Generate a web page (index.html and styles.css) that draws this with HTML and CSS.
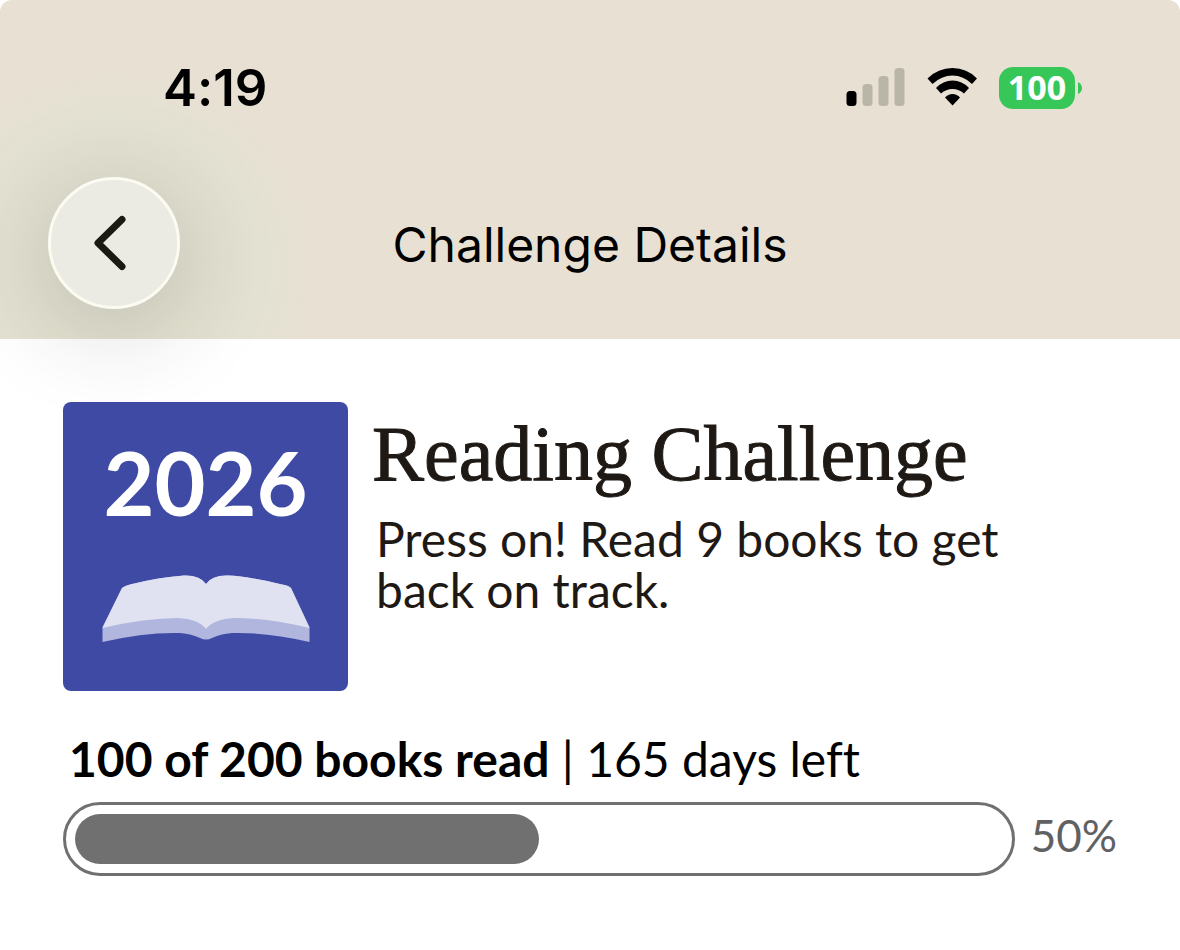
FILE: index.html
```html
<!DOCTYPE html>
<html lang="en">
<head>
<meta charset="utf-8">
<meta name="viewport" content="width=device-width, initial-scale=1">
<title>Challenge Details</title>
<link rel="stylesheet" href="styles.css">
</head>
<body>
<header class="header">
  <div class="status">
    <time class="clock">4:19</time>
    <div class="indicators">
      <svg class="signal" width="60" height="42" viewBox="0 0 60 42" role="img" aria-label="Signal: one bar">
        <rect x="1.500" y="24" width="10" height="15" rx="3.500"/>
        <g fill="#b9b6a8">
          <rect x="17.500" y="17" width="10" height="22" rx="3.500"/>
          <rect x="33.500" y="9" width="10" height="30" rx="3.500"/>
          <rect x="49.500" y="1" width="10" height="38" rx="3.500"/>
        </g>
      </svg>
      <svg class="wifi" width="50" height="42" viewBox="0 0 50 42" role="img" aria-label="Wi-Fi">
        <path d="M0.500 11.500Q11 1 25.500 1T50 11.500L45 17Q36.500 8.500 25.500 8.500T5.500 17Z"/>
        <path d="M9 21Q16 13.500 25.500 13.500T42 21L37 26.500Q32 22 25.500 22T14 26.500Z"/>
        <path d="M18 30.500Q21 27 25.500 27T33 30.500L25.500 38.500Z"/>
      </svg>
      <div class="battery"><span class="battery-level">100</span><svg width="4" height="12" viewBox="0 0 4 12" aria-hidden="true"><path d="M0 0Q4 2 4 6T0 12Z" fill="#37c759"/></svg></div>
    </div>
  </div>
  <nav class="navbar">
    <button class="back" type="button" aria-label="Back">
      <svg width="34" height="56" viewBox="0 0 34 56" aria-hidden="true"><path d="M29 4.500L5 28L29 51.500" fill="none" stroke="#1b1a12" stroke-width="7" stroke-linecap="round" stroke-linejoin="round"/></svg>
    </button>
    <h1 class="screen-title">Challenge Details</h1>
  </nav>
</header>
<main class="content">
  <section class="challenge">
    <div class="cover">
      <span class="year">2026</span>
      <svg class="book" width="208" height="68" viewBox="0 0 208 68" aria-hidden="true">
        <path d="M0.500 52L20 13Q23 10.500 28 9.500Q58 2 82 0.500Q98 0 104 9Q110 0 126 0.500Q145 1 180 9.500Q186 10 189 13L207.500 52V67Q165 57 130 58Q118 59 110 63Q104 66 98 63Q90 59 78 58Q43 57 0.500 67Z" fill="#b1b6df"/>
        <path d="M0.500 53L20 13Q23 10.500 28 9.500Q58 2 82 0.500Q98 0 104 9Q110 0 126 0.500Q145 1 180 9.500Q186 10 189 13L207.500 53Q165 43 132 43Q112 44 104 54Q96 44 76 43Q43 43 0.500 53Z" fill="#e0e2f1"/>
      </svg>
    </div>
    <div class="summary">
      <h2 class="name">Reading Challenge</h2>
      <p class="message">Press on! Read 9 books to get back on track.</p>
    </div>
  </section>
  <section class="progress">
    <p class="count"><strong>100 of 200 books read</strong> | 165 days left</p>
    <div class="meter">
      <div class="track" role="progressbar" aria-label="Books read" aria-valuenow="50" aria-valuemin="0" aria-valuemax="100"><div class="fill" style="width:50%"></div></div>
      <span class="percent">50%</span>
    </div>
  </section>
</main>
</body>
</html>
```
FILE: styles.css
```css
* { box-sizing: border-box; }
body { margin: 0; background: #fff; color: #000; font-family: Lato, sans-serif; font-variant-ligatures: none; }
h1, h2, p { margin: 0; font-weight: 400; }
.header { padding: 56px 48px 30px; background: radial-gradient(circle at 114px 270px, #e2e1cf 0, #e4e2d2 150px, #e7e0d3 200px); border-radius: 12px 12px 0 0; font-family: Inter, sans-serif; }
.status { display: flex; justify-content: space-between; align-items: center; height: 64px; padding: 0 50px 0 115px; }
.clock { font-size: 51px; font-weight: 600; line-height: 64px; }
.indicators { display: flex; align-items: center; gap: 22px; }
.battery { display: flex; align-items: center; gap: 3px; }
.battery-level { width: 76px; height: 42px; border-radius: 14px; background: #37c759; color: #fff; font: 700 34px/40px "Noto Sans", sans-serif; text-align: center; }
.navbar { display: grid; grid-template-columns: 132px 1fr 132px; align-items: center; margin-top: 57px; }
.back { display: flex; align-items: center; justify-content: center; width: 132px; height: 132px; padding: 0 8px 0 0; border: 3px solid #fbfbf2; border-radius: 50%; background: #ebebe4; box-shadow: 0 16px 100px rgba(40, 40, 45, .22); }
.screen-title { padding-top: 4px; font-size: 48px; line-height: 60px; text-align: center; }
.content { padding: 63px 63px 48px; }
.challenge { display: flex; gap: 24px; }
.cover { position: relative; display: flex; flex: none; flex-direction: column; align-items: center; width: 285px; height: 289px; padding-top: 26px; border-radius: 8px; background: #3e4aa4; }
.year { color: #fff; font-size: 88px; font-weight: 700; line-height: 108px; }
.book { margin-top: 39px; }
.summary { padding-top: 8px; color: #1e1914; }
.name { font-family: "Liberation Serif", serif; font-size: 78px; line-height: 88px; -webkit-text-stroke: 1px #1e1914; }
.message { max-width: 680px; padding: 15px 4px 0; font-size: 48px; line-height: 51px; }
.progress { margin-top: 40px; }
.count { padding-left: 6px; font-size: 48px; line-height: 56px; }
.count strong { font-weight: 700; }
.meter { display: flex; align-items: center; gap: 16px; margin-top: 15px; }
.track { flex: 1; height: 74px; padding: 9px; border: 3px solid #707070; border-radius: 37px; }
.fill { height: 50px; border-radius: 25px; background: #707070; }
.percent { padding-bottom: 8px; color: #5f6163; font-size: 44px; line-height: 56px; }
```
